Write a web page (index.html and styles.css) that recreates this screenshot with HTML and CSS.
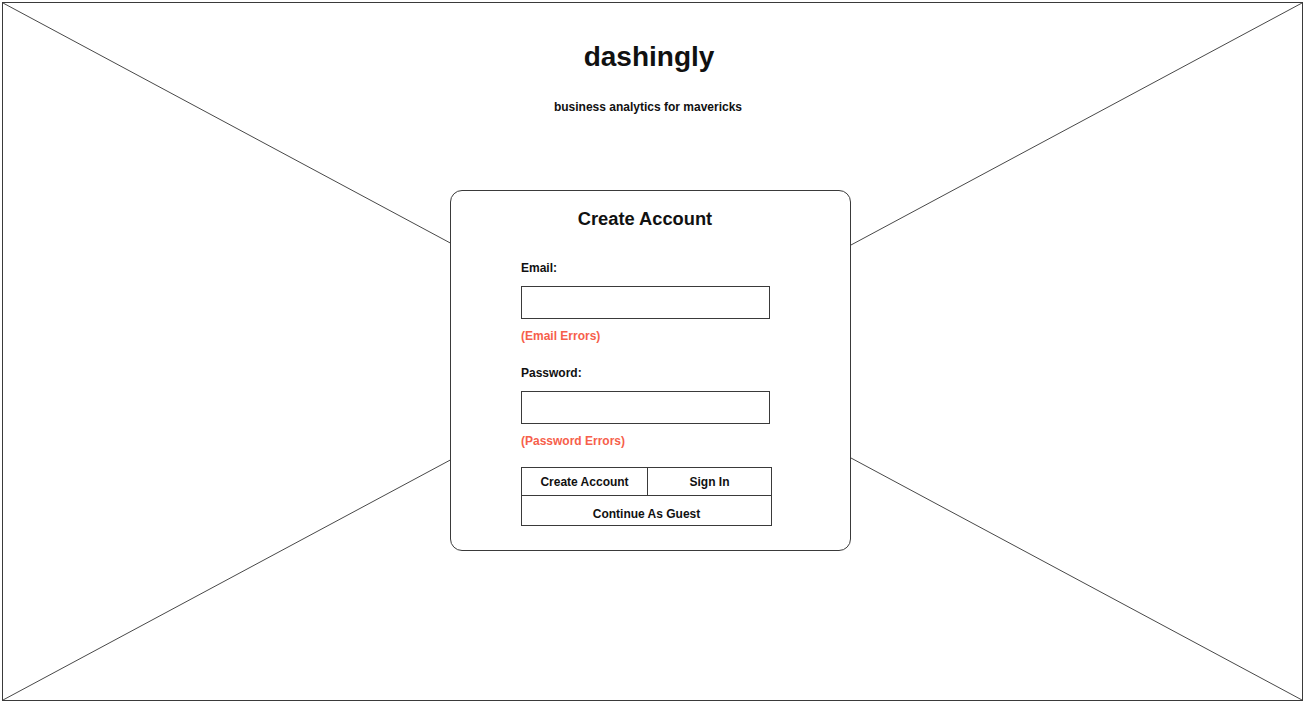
FILE: index.html
```html
<!DOCTYPE html>
<html lang="en">
<head>
<meta charset="utf-8">
<title>dashingly</title>
<link rel="stylesheet" href="styles.css">
</head>
<body>
<div class="frame">
  <svg class="cross" width="1299" height="697" viewBox="0 0 1299 697" aria-hidden="true">
    <line x1="0" y1="0" x2="1299" y2="697"/>
    <line x1="1299" y1="0" x2="0" y2="697"/>
  </svg>
  <h1 class="brand">dashingly</h1>
  <p class="tagline">business analytics for mavericks</p>
  <div class="card">
    <h2 class="card-title">Create Account</h2>
    <form class="form">
      <label class="label" for="email">Email:</label>
      <input class="input" id="email" type="text">
      <div class="error">(Email Errors)</div>
      <label class="label label-gap" for="password">Password:</label>
      <input class="input" id="password" type="password">
      <div class="error">(Password Errors)</div>
      <div class="buttons">
        <button type="button" class="btn btn-left">Create Account</button>
        <button type="button" class="btn">Sign In</button>
        <button type="button" class="btn btn-wide">Continue As Guest</button>
      </div>
    </form>
  </div>
</div>
</body>
</html>
```

FILE: styles.css
```css
html, body {
  margin: 0;
  padding: 0;
  background: #ffffff;
}
body {
  font-family: "Liberation Sans", Arial, sans-serif;
  color: #111111;
}
.frame {
  position: relative;
  box-sizing: border-box;
  margin: 2px 0 0 2px;
  width: 1301px;
  height: 699px;
  border: 1px solid #3a3a3a;
  display: flex;
  flex-direction: column;
  align-items: center;
  padding: 38px 4px 0 0;
}
.cross {
  position: absolute;
  left: 0;
  top: 0;
  z-index: 0;
}
.cross line {
  stroke: #333333;
  stroke-width: 0.9;
}
.brand {
  position: relative;
  margin: 0 3px 0 0;
  font-size: 28px;
  line-height: 32px;
  font-weight: bold;
  color: #111111;
}
.tagline {
  position: relative;
  margin: 27px 5px 0 0;
  font-size: 12px;
  line-height: 14px;
  font-weight: bold;
  color: #111111;
}
.card {
  position: relative;
  z-index: 1;
  box-sizing: border-box;
  margin-top: 76px;
  width: 401px;
  height: 361px;
  border: 1px solid #3a3a3a;
  border-radius: 12px;
  background: #ffffff;
  padding: 17px 0 0 70px;
}
.card-title {
  margin: 0 0 0 -70px;
  padding-right: 11px;
  text-align: center;
  font-size: 18.3px;
  line-height: 21px;
  font-weight: bold;
  color: #111111;
}
.form {
  display: flex;
  flex-direction: column;
  align-items: flex-start;
  margin-top: 32px;
}
.label {
  display: block;
  font-size: 12px;
  line-height: 14px;
  font-weight: bold;
  color: #111111;
}
.label-gap {
  margin-top: 23px;
}
.input {
  box-sizing: border-box;
  margin: 11px 0 0;
  width: 249px;
  height: 33px;
  border: 1px solid #3a3a3a;
  border-radius: 0;
  padding: 0 6px;
  background: #ffffff;
  font-family: inherit;
  font-size: 12px;
  outline: none;
}
.error {
  margin-top: 10px;
  font-size: 12px;
  line-height: 14px;
  font-weight: bold;
  color: #f6604b;
}
.buttons {
  box-sizing: border-box;
  margin-top: 19px;
  width: 251px;
  border: 1px solid #3a3a3a;
  display: grid;
  grid-template-columns: 126px 123px;
  grid-template-rows: 28px 29px;
}
.btn {
  box-sizing: border-box;
  margin: 0;
  padding: 0;
  border: 0;
  border-bottom: 1px solid #3a3a3a;
  background: #ffffff;
  font-family: inherit;
  font-size: 12px;
  font-weight: bold;
  color: #111111;
  text-align: center;
  cursor: pointer;
}
.btn-left {
  border-right: 1px solid #3a3a3a;
}
.btn-wide {
  grid-column: 1 / 3;
  border-bottom: 0;
  padding-top: 6px;
}
```
